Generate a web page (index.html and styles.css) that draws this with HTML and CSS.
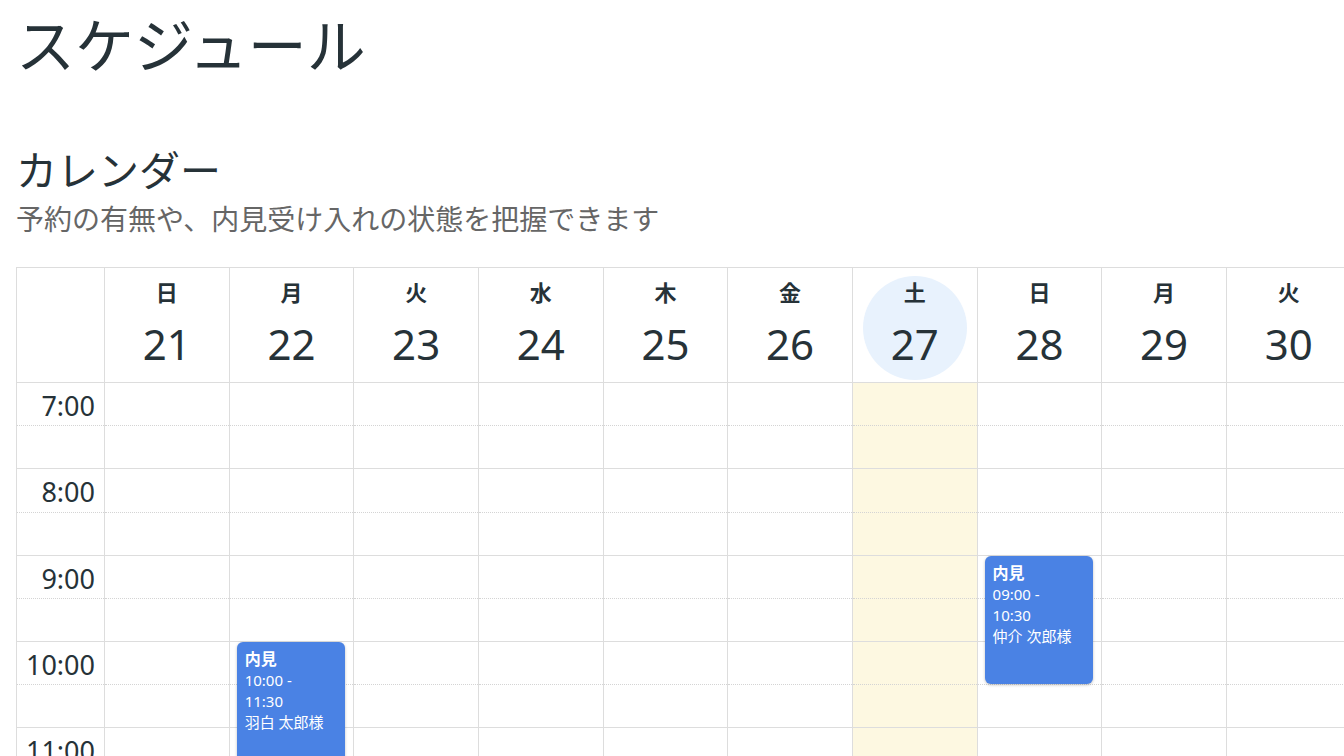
FILE: index.html
```html
<!DOCTYPE html>
<html lang="ja">
<head>
  <meta charset="UTF-8" />
  <meta name="viewport" content="width=device-width, initial-scale=1.0">
  <title>スケジュール</title>
  <link rel="stylesheet" href="styles.css">
</head>
<body>
  <h1>スケジュール</h1>

  <section class="calendar-section">
    <h2>カレンダー</h2>
    <p class="lead">予約の有無や、内見受け入れの状態を把握できます</p>

    <div class="calendar">
      <div class="cal-head" id="cal-head">
        <div class="head-cell axis"></div>
      </div>
      <div class="cal-body" id="cal-body">
        <div class="day-col axis" id="axis-col"></div>
      </div>
    </div>
  </section>

  <script>
    const days = [
      { dow: '日', date: 21 },
      { dow: '月', date: 22 },
      { dow: '火', date: 23 },
      { dow: '水', date: 24 },
      { dow: '木', date: 25 },
      { dow: '金', date: 26 },
      { dow: '土', date: 27 },
      { dow: '日', date: 28 },
      { dow: '月', date: 29 },
      { dow: '火', date: 30 }
    ];
    const today = 27;
    const startHour = 7;
    const endHour = 19;
    const slotHeight = 43.15;

    const events = [
      { date: 22, title: '内見', start: '10:00', end: '11:30', guest: '羽白 太郎様' },
      { date: 28, title: '内見', start: '09:00', end: '10:30', guest: '仲介 次郎様' }
    ];

    const head = document.getElementById('cal-head');
    const body = document.getElementById('cal-body');
    const axis = document.getElementById('axis-col');
    const slotCount = (endHour - startHour) * 2;

    function toOffset(time) {
      const [h, m] = time.split(':').map(Number);
      return ((h - startHour) * 60 + m) / 30 * slotHeight;
    }

    function makeSlots(col, withLabels) {
      for (let i = 0; i < slotCount; i++) {
        const slot = document.createElement('div');
        slot.className = i % 2 ? 'slot hour-end' : 'slot';
        if (withLabels && i % 2 === 0) {
          slot.innerHTML = `<div class="time-label">${startHour + i / 2}:00</div>`;
        }
        col.appendChild(slot);
      }
    }

    makeSlots(axis, true);

    days.forEach(day => {
      const cell = document.createElement('div');
      cell.className = day.date === today ? 'head-cell today' : 'head-cell';
      cell.innerHTML = `
        <span class="dow">${day.dow}</span>
        <span class="date">${day.date}</span>
      `;
      head.appendChild(cell);

      const col = document.createElement('div');
      col.className = day.date === today ? 'day-col today' : 'day-col';
      makeSlots(col, false);

      events.filter(ev => ev.date === day.date).forEach(ev => {
        const top = toOffset(ev.start);
        const height = toOffset(ev.end) - top - 1;
        const el = document.createElement('div');
        el.className = 'event';
        el.style.top = top + 'px';
        el.style.height = height + 'px';
        el.innerHTML = `
          <div class="event-title">${ev.title}</div>
          <div class="event-time">${ev.start} -<br>${ev.end}</div>
          <div class="event-guest">${ev.guest}</div>
        `;
        col.appendChild(el);
      });

      body.appendChild(col);
    });
  </script>
</body>
</html>
```

FILE: styles.css
```css
html, body {
  overflow: hidden;
}
body {
  margin: 0;
  padding: 0 16px;
  font-family: "Noto Sans", "Noto Sans CJK JP", sans-serif;
  color: #263238;
  background-color: #fff;
}
h1 {
  font-size: 59px;
  font-weight: 400;
  line-height: 1.2;
  margin: 10px 0 0;
}
h2 {
  font-size: 41px;
  font-weight: 400;
  line-height: 1.2;
  margin: 65px 0 0;
}
.lead {
  font-size: 28px;
  line-height: 1.4;
  color: #666;
  margin: 5px 0 28px;
}
.calendar {
  width: 1336px;
  border-top: 1px solid #ddd;
  border-left: 1px solid #ddd;
}
.cal-head, .cal-body {
  display: grid;
  grid-template-columns: 88px repeat(10, 124.67px);
}
.head-cell {
  position: relative;
  height: 115px;
  box-sizing: border-box;
  padding-top: 9px;
  display: flex;
  flex-direction: column;
  align-items: center;
  border-right: 1px solid #ddd;
  border-bottom: 1px solid #ddd;
}
.head-cell.today::before {
  content: '';
  position: absolute;
  top: 8px;
  left: 50%;
  width: 104px;
  height: 104px;
  margin-left: -52px;
  border-radius: 50%;
  background-color: #e8f2fd;
}
.head-cell span {
  position: relative;
}
.dow {
  font-size: 22px;
  font-weight: 700;
  line-height: 30px;
}
.date {
  font-size: 42px;
  line-height: 50px;
  margin-top: 12px;
}
.day-col {
  position: relative;
  border-right: 1px solid #ddd;
}
.day-col.today {
  background-color: #fdf8e1;
}
.slot {
  height: 43.15px;
  box-sizing: border-box;
  border-bottom: 1px dotted #d4d4d4;
}
.slot.hour-end {
  border-bottom: 1px solid #ddd;
}
.time-label {
  font-size: 27px;
  line-height: 38px;
  text-align: right;
  padding: 4px 9px 0 0;
}
.event {
  position: absolute;
  left: 7px;
  right: 8px;
  z-index: 1;
  box-sizing: border-box;
  padding: 6px 8px;
  overflow: hidden;
  background-color: #4a82e4;
  color: #fff;
  border-radius: 6px;
  box-shadow: 0 1px 3px rgba(0, 0, 0, 0.25);
  font-size: 15px;
  line-height: 21px;
}
.event-title {
  font-size: 16px;
  font-weight: 700;
  line-height: 22px;
}
```
